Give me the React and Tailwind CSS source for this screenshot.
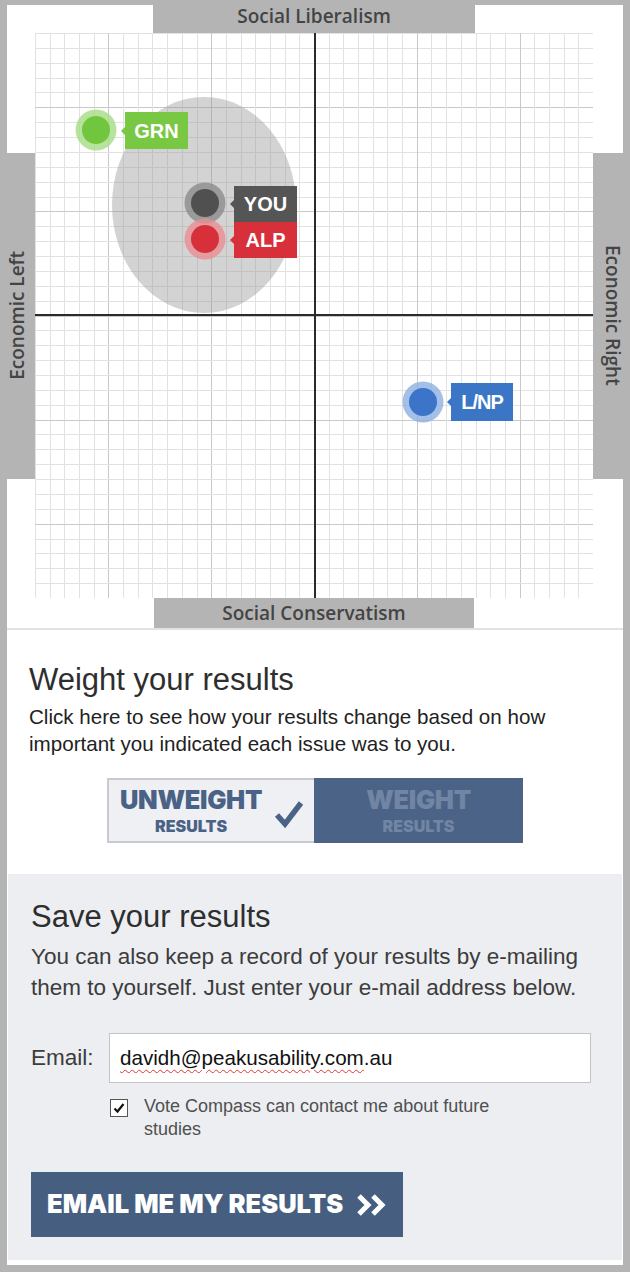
import React from 'react';

const GW = 558;
const GH = 565;
const CELLS = 38;

// grid for the compass chart
const Grid = () => {
  const lines = [];
  for (let i = 0; i <= CELLS; i++) {
    const major = i >= 5 && i <= 33 && (i - 5) % 7 === 0;
    const x = Math.round((i * GW) / CELLS) + 0.5;
    const y = Math.round((i * GH) / CELLS) + 0.5;
    lines.push(
      <line key={'v' + i} x1={x} x2={x} y1={0} y2={GH} stroke={major ? '#c8c8c8' : '#e2e2e2'} strokeWidth={1} />
    );
    lines.push(
      <line key={'h' + i} x1={0} x2={GW} y1={y} y2={y} stroke={major ? '#c8c8c8' : '#e2e2e2'} strokeWidth={1} />
    );
  }
  return lines;
};

const dots = [
  { key: 'grn', cx: 61, cy: 97, fill: '#72c63e', halo: '#a6dc84' },
  { key: 'you', cx: 170, cy: 170, fill: '#505050', halo: '#8c8c8c' },
  { key: 'alp', cx: 170, cy: 206, fill: '#d7303a', halo: '#e98f94' },
  { key: 'lnp', cx: 388, cy: 369, fill: '#3b74c8', halo: '#8fb0e0' },
];

const Chart = () => (
  <div className="relative h-[565px] w-[558px] bg-white">
    <svg width={GW} height={GH} className="block">
      <Grid />
      <ellipse cx={169} cy={172} rx={92} ry={108} fill="rgba(150,150,150,0.42)" />
      <line x1={280} x2={280} y1={0} y2={GH} stroke="#2b2b2b" strokeWidth={2} />
      <line x1={0} x2={GW} y1={282} y2={282} stroke="#2b2b2b" strokeWidth={2} />
      {dots.map((d) => (
        <g key={d.key}>
          <circle cx={d.cx} cy={d.cy} r={20.5} fill={d.halo} opacity={0.8} />
          <circle cx={d.cx} cy={d.cy} r={14} fill={d.fill} />
        </g>
      ))}
    </svg>

    <div className="absolute left-[90px] top-[79px] flex h-[37px] w-[63px] items-center justify-center bg-[#79c843] text-[20px] font-bold text-white">
      <span className="absolute left-[-4px] top-[15px] h-0 w-0 border-y-[4px] border-r-[4px] border-y-transparent border-r-[#79c843]" />
      GRN
    </div>
    <div className="absolute left-[199px] top-[153px] flex h-[36px] w-[63px] items-center justify-center bg-[#555555] text-[20px] font-bold text-white">
      <span className="absolute left-[-4px] top-[14px] h-0 w-0 border-y-[4px] border-r-[4px] border-y-transparent border-r-[#555555]" />
      YOU
    </div>
    <div className="absolute left-[199px] top-[189px] flex h-[36px] w-[63px] items-center justify-center bg-[#d7303b] text-[20px] font-bold text-white">
      <span className="absolute left-[-4px] top-[14px] h-0 w-0 border-y-[4px] border-r-[4px] border-y-transparent border-r-[#d7303b]" />
      ALP
    </div>
    <div className="absolute left-[416px] top-[350px] flex h-[38px] w-[62px] items-center justify-center bg-[#3a76c5] text-[20px] font-bold tracking-[-1px] text-white">
      <span className="absolute left-[-4px] top-[15px] h-0 w-0 border-y-[4px] border-r-[4px] border-y-transparent border-r-[#3a76c5]" />
      L/NP
    </div>
  </div>
);

const axisText = "font-['Open_Sans',sans-serif] text-[19px] font-semibold text-[#444444] whitespace-nowrap";

export default function App() {
  return (
    <div className="h-[1272px] w-[630px] bg-[#b4b4b4] pb-[7px] pl-[7px] pr-[7px] pt-[5px] font-['Liberation_Sans',Arial,sans-serif]">
      <div className="flex h-full flex-col bg-white">
        {/* Compass */}
        <div className="grid grid-cols-[28px_558px_30px] grid-rows-[28px_565px_30px]">
          <div />
          <div className="flex justify-center">
            <div className={`flex h-full w-[322px] items-center justify-center bg-[#b4b4b4] pb-[5px] ${axisText}`}>
              Social Liberalism
            </div>
          </div>
          <div />

          <div className="flex items-center">
            <div className="flex h-[326px] w-full items-center justify-center bg-[#b4b4b4] pr-[7px]">
              <span className={`rotate-180 [writing-mode:vertical-rl] ${axisText}`}>Economic Left</span>
            </div>
          </div>
          <Chart />
          <div className="flex items-center">
            <div className="flex h-[326px] w-full items-center justify-center bg-[#b4b4b4] pl-[10px]">
              <span className={`[writing-mode:vertical-rl] ${axisText}`}>Economic Right</span>
            </div>
          </div>

          <div />
          <div className="flex justify-center">
            <div className={`flex h-full w-[320px] items-center justify-center bg-[#b4b4b4] ${axisText}`}>
              Social Conservatism
            </div>
          </div>
          <div />
        </div>

        <div className="h-[2px] bg-[#e2e2e2]" />

        {/* Weight section */}
        <div className="h-[244px] px-[22px] pt-[32px]">
          <h2 className="text-[31px] leading-[36px] text-[#2e2e2e]">Weight your results</h2>
          <p className="mt-[5px] text-[20.6px] leading-[27px] text-[#222222]">
            Click here to see how your results change based on how important you indicated each issue was to you.
          </p>
          <div className="mx-auto mt-[21px] flex h-[65px] w-[416px]">
            <div className="flex w-[207px] items-center border-y-2 border-l-2 border-[#c8cad0] bg-[#eef0f4] pl-[11px]">
              <div className="flex flex-col items-center font-['Inter',sans-serif] font-black leading-none text-[#4a6285]">
                <span className="text-[25.5px] tracking-[-0.3px]">UNWEIGHT</span>
                <span className="mt-[5px] text-[16px]">RESULTS</span>
              </div>
              <svg width="30" height="30" viewBox="0 0 30 30" className="ml-[12px] mt-[6px]">
                <path d="M3 16 L11 25 L27 4" fill="none" stroke="#4a6285" strokeWidth="5.5" strokeLinejoin="miter" />
              </svg>
            </div>
            <div className="flex flex-1 flex-col items-center justify-center bg-[#4b6387] font-['Inter',sans-serif] font-black leading-none text-[#7185a4]">
              <span className="text-[25.5px] tracking-[-0.3px]">WEIGHT</span>
              <span className="mt-[5px] text-[16px]">RESULTS</span>
            </div>
          </div>
        </div>

        {/* Save section */}
        <div className="mx-[1px] flex-1 bg-[#eceef2] px-[23px] pt-[25px]">
          <h2 className="text-[31px] leading-[36px] text-[#2e2e2e]">Save your results</h2>
          <p className="mt-[6px] text-[22.5px] leading-[31px] text-[#3c3c3c]">
            You can also keep a record of your results by e-mailing them to yourself. Just enter your e-mail address below.
          </p>
          <div className="mt-[30px] flex items-center">
            <span className="w-[78px] text-[22.5px] text-[#3c3c3c]">Email:</span>
            <div className="flex h-[50px] w-[482px] items-center border border-[#c4c4c4] bg-white pl-[10px] text-[20.6px] text-[#111111]">
              <span className="underline decoration-[#e0362f] decoration-wavy decoration-1 underline-offset-[4px]">
                davidh@peakusability.com
              </span>
              <span>.au</span>
            </div>
          </div>
          <div className="ml-[79px] mt-[12px] flex items-start">
            <div className="mt-[4px] flex h-[18px] w-[18px] items-center justify-center border border-[#555555] bg-white">
              <svg width="12" height="12" viewBox="0 0 12 12">
                <path d="M1.5 6.5 L4.5 9.5 L10.5 2" fill="none" stroke="#111111" strokeWidth="2.2" />
              </svg>
            </div>
            <p className="ml-[16px] w-[380px] text-[18px] leading-[23px] text-[#505050]">
              Vote Compass can contact me about future studies
            </p>
          </div>
          <button className="mt-[31px] flex h-[65px] w-[372px] items-center bg-[#465f81] pl-[16px] font-['Inter',sans-serif] text-[25.5px] font-black tracking-[0px] text-white">
            EMAIL ME MY RESULTS
            <svg width="34" height="24" viewBox="0 0 34 24" className="ml-[13px]">
              <path d="M3 3 L12 12 L3 21" fill="none" stroke="#ffffff" strokeWidth="5" />
              <path d="M17 3 L26 12 L17 21" fill="none" stroke="#ffffff" strokeWidth="5" />
            </svg>
          </button>
        </div>
        <div className="h-[5px]" />
      </div>
    </div>
  );
}
